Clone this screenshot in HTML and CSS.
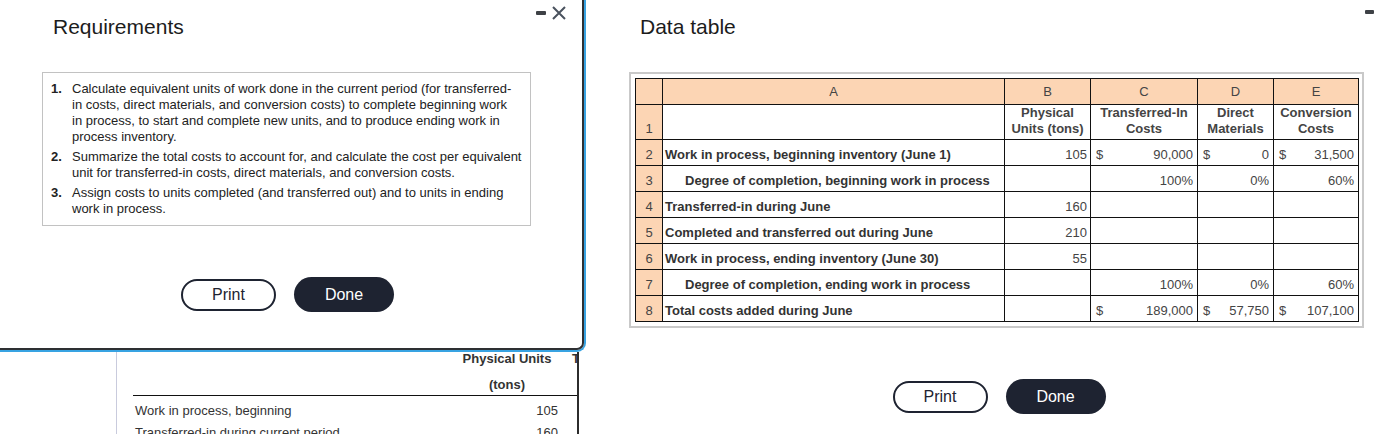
FILE: index.html
```html
<!DOCTYPE html>
<html lang="en">
<head>
<meta charset="utf-8">
<title>Requirements / Data table</title>
<link rel="stylesheet" href="styles.css">
</head>
<body>
<div class="page">
  <div class="left-col">
    <div class="dlg-outer">
      <div class="dlg">
        <div class="dlg-head">
          <h1 class="dlg-title">Requirements</h1>
          <div class="dlg-ctrls">
            <span class="min-btn"></span>
            <svg class="close-btn" width="14" height="14" viewBox="0 0 14 14" aria-hidden="true"><path d="M1 1L13 13M13 1L1 13" stroke="#4a525e" stroke-width="2" fill="none"/></svg>
          </div>
        </div>
        <div class="req-box">
          <div class="req-item"><span class="req-num">1.</span><span class="req-text">Calculate equivalent units of work done in the current period (for transferred-<br>in costs, direct materials, and conversion costs) to complete beginning work<br>in process, to start and complete new units, and to produce ending work in<br>process inventory.</span></div>
          <div class="req-item"><span class="req-num">2.</span><span class="req-text">Summarize the total costs to account for, and calculate the cost per equivalent<br>unit for transferred-in costs, direct materials, and conversion costs.</span></div>
          <div class="req-item"><span class="req-num">3.</span><span class="req-text">Assign costs to units completed (and transferred out) and to units in ending<br>work in process.</span></div>
        </div>
        <div class="btn-row btn-row-left">
          <button class="btn btn-outline">Print</button>
          <button class="btn btn-solid">Done</button>
        </div>
      </div>
    </div>
    <div class="bg-panel">
      <div class="bg-inner">
        <div class="bg-head">
          <span></span>
          <span class="bg-colhead"><span class="bg-l1">Physical Units</span><span class="bg-l2">(tons)</span></span>
          <span class="bg-next">T</span>
        </div>
        <div class="bg-row bg-first"><span>Work in process, beginning</span><span class="bg-num">105</span><span></span></div>
        <div class="bg-row"><span>Transferred-in during current period</span><span class="bg-num">160</span><span></span></div>
      </div>
    </div>
  </div>

  <div class="right-col">
    <div class="dt-head">
      <h1 class="dt-title">Data table</h1>
      <span class="min-btn min-right"></span>
    </div>
    <div class="dt-frame">
      <table class="sheet">
        <colgroup>
          <col class="c-num"><col class="c-a"><col class="c-b"><col class="c-c"><col class="c-d"><col class="c-e">
        </colgroup>
        <tr class="hdr">
          <td class="rn"></td><td>A</td><td>B</td><td>C</td><td>D</td><td>E</td>
        </tr>
        <tr class="r1">
          <td class="rn">1</td><td></td>
          <td class="ch">Physical<br>Units (tons)</td>
          <td class="ch">Transferred-In<br>Costs</td>
          <td class="ch">Direct<br>Materials</td>
          <td class="ch">Conversion<br>Costs</td>
        </tr>
        <tr>
          <td class="rn">2</td><td class="lbl">Work in process, beginning inventory (June 1)</td>
          <td class="num units">105</td>
          <td class="money"><div class="m"><span>$</span><span>90,000</span></div></td>
          <td class="money"><div class="m"><span>$</span><span>0</span></div></td>
          <td class="money"><div class="m"><span>$</span><span>31,500</span></div></td>
        </tr>
        <tr>
          <td class="rn">3</td><td class="lbl ind">Degree of completion, beginning work in process</td>
          <td class="num units"></td><td class="num">100%</td><td class="num">0%</td><td class="num">60%</td>
        </tr>
        <tr>
          <td class="rn">4</td><td class="lbl">Transferred-in during June</td>
          <td class="num units">160</td><td></td><td></td><td></td>
        </tr>
        <tr>
          <td class="rn">5</td><td class="lbl">Completed and transferred out during June</td>
          <td class="num units">210</td><td></td><td></td><td></td>
        </tr>
        <tr>
          <td class="rn">6</td><td class="lbl">Work in process, ending inventory (June 30)</td>
          <td class="num units">55</td><td></td><td></td><td></td>
        </tr>
        <tr>
          <td class="rn">7</td><td class="lbl ind">Degree of completion, ending work in process</td>
          <td class="num units"></td><td class="num">100%</td><td class="num">0%</td><td class="num">60%</td>
        </tr>
        <tr>
          <td class="rn">8</td><td class="lbl">Total costs added during June</td>
          <td class="num units"></td>
          <td class="money"><div class="m"><span>$</span><span>189,000</span></div></td>
          <td class="money"><div class="m"><span>$</span><span>57,750</span></div></td>
          <td class="money"><div class="m"><span>$</span><span>107,100</span></div></td>
        </tr>
      </table>
    </div>
    <div class="btn-row btn-row-right">
      <button class="btn btn-outline">Print</button>
      <button class="btn btn-solid">Done</button>
    </div>
  </div>
</div>
</body>
</html>
```

FILE: styles.css
```css
html, body {
  margin: 0;
  padding: 0;
  background: #fff;
}

body {
  font-family: "Liberation Sans", Arial, sans-serif;
  color: #222;
}

.page {
  display: flex;
  align-items: flex-start;
  width: 1377px;
  height: 434px;
  overflow: hidden;
}

/* ---------- left: Requirements dialog ---------- */
.left-col {
  flex: none;
  width: 586px;
  display: flex;
  flex-direction: column;
}

.dlg-outer {
  border-right: 2px solid #38a3e2;
  border-bottom: 2px solid #38a3e2;
  border-bottom-right-radius: 9px;
}

.dlg {
  width: 582px;
  height: 348px;
  background: #fff;
  border-right: 2px solid #2e3033;
  border-bottom: 2px solid #2e3033;
  border-bottom-right-radius: 7px;
}

.dlg-head {
  display: flex;
  justify-content: space-between;
  align-items: flex-start;
}

.dlg-title {
  margin: 15px 0 0 53px;
  font-size: 21px;
  line-height: 24px;
  font-weight: normal;
  color: #1c1c1c;
}

.dlg-ctrls {
  display: flex;
  align-items: center;
  gap: 6px;
  margin: 6px 16px 0 0;
}

.min-btn {
  display: block;
  width: 10px;
  height: 4px;
  border-radius: 1px;
  background: #3e4146;
}

.close-btn {
  display: block;
}

.req-box {
  margin: 33px 0 0 42px;
  width: 479px;
  height: 136px;
  padding: 8px 0 8px 8px;
  border: 1px solid #c2c2c2;
  display: flex;
  flex-direction: column;
  gap: 4px;
}

.req-item {
  display: flex;
  font-size: 13px;
  line-height: 16px;
  color: #222;
}

.req-num {
  flex: none;
  width: 21px;
  font-weight: bold;
}

.req-text {
  white-space: nowrap;
}

.btn-row {
  display: flex;
  justify-content: center;
  align-items: center;
  gap: 18px;
}

.btn-row-left {
  margin-top: 51px;
  padding-right: 7px;
}

.btn {
  font-family: "Liberation Sans", Arial, sans-serif;
  font-size: 16px;
  cursor: pointer;
  padding: 0;
}

.btn-outline {
  width: 95px;
  height: 32px;
  border: 2px solid #1e2331;
  border-radius: 16px;
  background: #fff;
  color: #1e2331;
}

.btn-solid {
  width: 100px;
  height: 35px;
  border: none;
  border-radius: 18px;
  background: #1e2331;
  color: #fff;
}

/* ---------- page content behind the dialog ---------- */
.bg-panel {
  margin-left: 116px;
  width: 460px;
  height: 82px;
  border-left: 1px solid #c9cbdd;
  border-right: 2px solid #2c2c2c;
  overflow: hidden;
}

.bg-inner {
  margin-left: 16px;
  font-size: 13px;
  color: #333;
}

.bg-head,
.bg-row {
  display: grid;
  grid-template-columns: 323px 102px 1fr;
}

.bg-head {
  border-bottom: 1px solid #111;
  padding-bottom: 3px;
  font-weight: bold;
}

.bg-colhead {
  display: flex;
  flex-direction: column;
  align-items: center;
}

.bg-l1 {
  line-height: 14px;
}

.bg-l2 {
  line-height: 14px;
  margin-top: 12px;
}

.bg-next {
  line-height: 14px;
  padding-left: 14px;
}

.bg-row {
  line-height: 22px;
  white-space: nowrap;
}

.bg-first {
  padding-top: 4px;
}

.bg-row > span:first-child {
  padding-left: 2px;
}

.bg-num {
  text-align: right;
}

/* ---------- right: Data table ---------- */
.right-col {
  flex: 1;
  margin-left: 43px;
  display: flex;
  flex-direction: column;
}

.dt-head {
  display: flex;
  justify-content: space-between;
  align-items: flex-start;
}

.dt-title {
  margin: 15px 0 0 11px;
  font-size: 21px;
  line-height: 24px;
  font-weight: normal;
  color: #1c1c1c;
}

.min-right {
  margin: 10px 3px 0 0;
  width: 9px;
}

.dt-frame {
  margin-top: 33px;
  width: 723px;
  padding: 4px;
  border: 2px solid #c9c9c9;
}

.sheet {
  width: 723px;
  table-layout: fixed;
  border-collapse: collapse;
  font-size: 13px;
  color: #444;
}

.c-num { width: 27px; }
.c-a { width: 342px; }
.c-b { width: 86px; }
.c-c { width: 107px; }
.c-d { width: 76px; }
.c-e { width: 85px; }

.sheet td {
  border: 1px solid #111;
  height: 23px;
  padding: 0 4px 2px 4px;
  line-height: 16px;
  vertical-align: bottom;
  white-space: nowrap;
  overflow: hidden;
}

.sheet tr.hdr td {
  height: 25px;
  background: #fcd5b4;
  text-align: center;
  vertical-align: middle;
  padding-bottom: 0;
}

.sheet tr.r1 td {
  height: 32px;
}

.sheet td.rn {
  background: #fcd5b4;
  text-align: center;
  padding: 0 0 2px 0;
  color: #444;
}

.sheet td.ch {
  text-align: center;
  font-weight: bold;
  color: #444;
  padding: 0 2px 2px 2px;
}

.sheet td.lbl {
  font-weight: bold;
  color: #333;
  padding-left: 2px;
}

.sheet td.lbl.ind {
  padding-left: 22px;
}

.sheet td.num {
  text-align: right;
  padding-right: 4px;
}

.sheet td.units {
  padding-right: 3px;
}

.sheet td.money {
  padding-left: 5px;
  padding-right: 4px;
}

.m {
  display: flex;
  justify-content: space-between;
}

.btn-row-right {
  margin-top: 51px;
  width: 735px;
  padding-left: 5px;
  box-sizing: border-box;
}
```
